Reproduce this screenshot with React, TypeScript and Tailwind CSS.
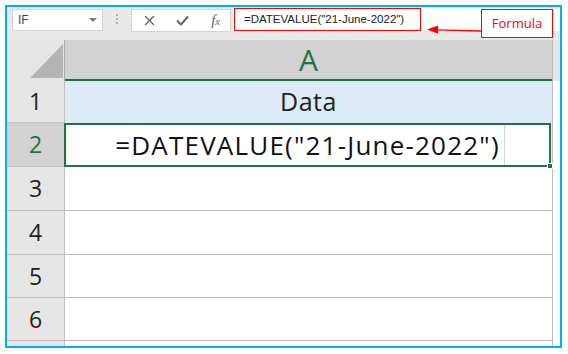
import React from "react";

const rows = [
  { n: "3", h: "h-[44px]" },
  { n: "4", h: "h-[44px]" },
  { n: "5", h: "h-[43px]" },
  { n: "6", h: "h-[43px]" },
];

const App: React.FC = () => {
  return (
    <div className="w-[568px] h-[354px] bg-white pt-[5px] pl-[5px] font-['Open_Sans',sans-serif]">
      <div className="relative w-[557px] h-[343px] border-2 border-[#00b0f0] bg-[#e9e9e9] flex flex-col">
        {/* Formula bar */}
        <div className="h-[33px] flex items-start">
          <div className="ml-[5px] mt-[2px] w-[91px] h-[22px] bg-white border border-[#d4d4d4] flex items-center justify-between px-[5px]">
            <span className="text-[12px] text-[#444] font-['Liberation_Sans',sans-serif]">IF</span>
            <svg width="8" height="5" viewBox="0 0 8 5">
              <path d="M0 0 L8 0 L4 4 Z" fill="#7a7a7a" />
            </svg>
          </div>
          <div className="w-[28px] h-[24px] flex flex-col items-center justify-center gap-[2px]">
            <span className="w-[2px] h-[2px] bg-[#b0b0b0]" />
            <span className="w-[2px] h-[2px] bg-[#b0b0b0]" />
            <span className="w-[2px] h-[2px] bg-[#b0b0b0]" />
          </div>
          <div className="mt-[2px] w-[100px] h-[23px] bg-white border border-[#d4d4d4] flex items-center">
            <div className="w-[33px] flex justify-center pl-[2px]">
              <svg width="11" height="11" viewBox="0 0 11 11">
                <path d="M1 1 L10 10 M10 1 L1 10" stroke="#666" strokeWidth="1.4" />
              </svg>
            </div>
            <div className="w-[33px] flex justify-center pl-[3px]">
              <svg width="13" height="11" viewBox="0 0 13 11">
                <path d="M1 5.5 L5 9.5 L12 1.5" stroke="#666" strokeWidth="2" fill="none" />
              </svg>
            </div>
            <div className="w-[33px] flex justify-center pl-[4px]">
              <span className="font-['Liberation_Serif',serif] italic text-[15px] text-[#666] leading-none">
                f<span className="text-[11px]">x</span>
              </span>
            </div>
          </div>
          <div className="ml-[2px] mt-[1px] flex-1 h-[23px] bg-white">
            <div className="ml-[1px] w-[187px] h-[23px] border border-[#ff0000] flex items-center pl-[9px]">
              <span className="text-[11.5px] text-[#222] font-['Liberation_Sans',sans-serif]">
                =DATEVALUE("21-June-2022")
              </span>
            </div>
          </div>
        </div>

        {/* Column header */}
        <div className="h-[41px] flex">
          <div className="relative w-[58px] h-full bg-[#e6e6e6] border-r border-[#ababab]">
            <svg className="absolute left-0 top-0" width="58" height="41" viewBox="0 0 58 41">
              <path d="M56 4 L56 38 L23 38 Z" fill="#b4b4b4" />
            </svg>
          </div>
          <div className="w-[487px] h-full bg-[#d2d2d2] border-b-2 border-[#217346] flex items-center justify-center">
            <span className="text-[30px] text-[#217346] leading-none">A</span>
          </div>
          <div className="flex-1 h-full bg-[#e6e6e6] border-l border-[#bdbdbd]" />
        </div>

        {/* Row 1 */}
        <div className="h-[42px] flex">
          <div className="w-[58px] h-full bg-[#e6e6e6] border-r border-b border-[#c0c0c0] flex items-center justify-center">
            <span className="text-[23px] text-[#222]">1</span>
          </div>
          <div className="w-[487px] h-full bg-[#ddebf7] flex items-center justify-center">
            <span className="text-[25px] text-[#222] tracking-[0.5px]">Data</span>
          </div>
          <div className="flex-1 h-full bg-white border-l border-[#bdbdbd]" />
        </div>

        {/* Row 2 (selected) */}
        <div className="h-[44px] flex">
          <div className="w-[58px] h-full bg-[#d2d2d2] border-r border-b border-[#c0c0c0] flex items-center justify-center">
            <span className="text-[23px] text-[#217346]">2</span>
          </div>
          <div className="relative w-[487px] h-full bg-white border-2 border-[#217346] -ml-[1px] flex items-center justify-center">
            <div className="absolute left-[438px] top-0 h-full w-px bg-[#d4d4d4]" />
            <span className="text-[26px] text-[#111] leading-none tracking-[1.2px]">=DATEVALUE("21-June-2022")</span>
            <div className="absolute -right-[4px] -bottom-[4px] w-[6px] h-[6px] bg-[#217346] border border-white" />
          </div>
          <div className="flex-1 h-full bg-white border-l border-[#bdbdbd] ml-[1px]" />
        </div>

        {rows.map((r) => (
          <div key={r.n} className={`${r.h} flex`}>
            <div className="w-[58px] h-full bg-[#e6e6e6] border-r border-b border-[#c0c0c0] flex items-center justify-center">
              <span className="text-[23px] text-[#222]">{r.n}</span>
            </div>
            <div className="w-[487px] h-full bg-white border-b border-[#bcbcbc]" />
            <div className="flex-1 h-full bg-white border-l border-[#bdbdbd]" />
          </div>
        ))}

        <div className="flex-1 flex">
          <div className="w-[58px] h-full bg-[#e6e6e6] border-r border-[#c0c0c0]" />
          <div className="w-[487px] h-full bg-white" />
          <div className="flex-1 h-full bg-white border-l border-[#bdbdbd]" />
        </div>

        {/* Annotation */}
        <svg className="absolute left-[418px] top-[10px]" width="58" height="20" viewBox="0 0 58 20">
          <path d="M56 14 L12 12.8" stroke="#ff0000" strokeWidth="1.3" />
          <path d="M2 12.5 L13 8.5 L13 16.8 Z" fill="#ff0000" />
        </svg>
        <div className="absolute left-[474px] top-[2px] w-[72px] h-[29px] bg-white border border-[#ff0000] flex items-center justify-center">
          <span className="text-[13px] text-[#ff0000]">Formula</span>
        </div>
      </div>
    </div>
  );
};

export default App;
